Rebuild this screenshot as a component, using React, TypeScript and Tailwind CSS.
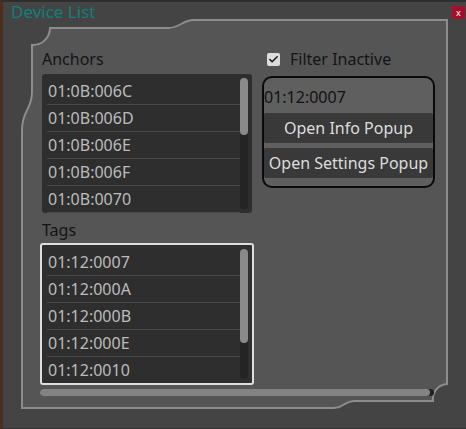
import { Check } from 'lucide-react';

const anchors = ['01:0B:006C', '01:0B:006D', '01:0B:006E', '01:0B:006F', '01:0B:0070'];
const tags = ['01:12:0007', '01:12:000A', '01:12:000B', '01:12:000E', '01:12:0010'];

function DeviceRows({ items, thumbHeight }: { readonly items: string[]; readonly thumbHeight: number }) {
  return (
    <div className="flex h-full">
      <div className="flex-1 pl-[5px] pt-[4px]">
        {items.map((item) => (
          <div
            key={item}
            className="h-[27px] border-b border-[#4a4a4a] pl-[1px] text-[16px] leading-[27px] text-[#bcbcbc]"
          >
            {item}
          </div>
        ))}
      </div>
      {/* vertical scrollbar */}
      <div className="mr-[4px] mt-[4px] mb-[4px] w-[8px] rounded-full bg-[#242424]">
        <div className="w-full rounded-full bg-[#8a8a8a]" style={{ height: thumbHeight }}></div>
      </div>
    </div>
  );
}

export default function App() {
  return (
    <div
      className="relative h-[429px] w-[466px] overflow-hidden border-t-2 border-l-[3px] border-b border-t-[#2e2e2e] border-l-[#4f2d1b] border-b-[#303030] bg-[#444444]"
      style={{ fontFamily: '"Noto Sans", "Open Sans", sans-serif' }}
    >
      {/* Frame drawing */}
      <svg className="absolute left-[-3px] top-[-2px] h-[429px] w-[466px]" viewBox="0 0 466 429">
        <path
          d="M 32 45 A 17 17 0 0 0 50 28 L 168 28 C 180 28 182 20 194 20 L 447 20 L 447 384 A 15 15 0 0 0 433 401 L 354 401 C 344 401 344 408 334 408 L 22 408 L 22 130 C 22 110 32 110 32 92 Z"
          fill="#555555"
          stroke="#8d8d8d"
          strokeWidth="2"
        />
      </svg>

      <div className="relative">
        {/* Title bar */}
        <div className="flex h-[22px] items-start justify-between pl-[8px] pr-[1px]">
          <span className="text-[17px] leading-[20px] text-[#0f7f7f]">Device List</span>
          <div className="mt-[4px] flex h-[13px] w-[13px] items-center justify-center bg-[#a3102b] text-[9px] leading-none text-white">
            x
          </div>
        </div>

        <div className="flex pl-[37px] pt-[25px]">
          {/* Left column */}
          <div className="w-[214px]">
            <div className="ml-[2px] h-[20px] text-[16px] leading-[20px] text-[#141414]">Anchors</div>
            <div className="mx-[2px] mt-[5px] h-[139px] overflow-hidden rounded-[3px] bg-[#2e2e2e]">
              <DeviceRows items={anchors} thumbHeight={57} />
            </div>
            <div className="ml-[2px] mt-[7px] h-[20px] text-[16px] leading-[20px] text-[#141414]">Tags</div>
            <div className="mt-[3px] h-[142px] overflow-hidden rounded-[3px] border-2 border-[#dedede] bg-[#2e2e2e]">
              <DeviceRows items={tags} thumbHeight={94} />
            </div>
            {/* horizontal scrollbar */}
            <div className="mt-[4px] h-[7px] w-[394px] rounded-full bg-[#222222]">
              <div className="h-full w-[390px] rounded-full bg-[#838383]"></div>
            </div>
          </div>

          {/* Right column */}
          <div className="ml-[8px] w-[173px]">
            <div className="flex h-[20px] items-center">
              <div className="ml-[5px] flex h-[13px] w-[13px] items-center justify-center rounded-[2px] bg-[#dcdcdc]">
                <Check className="h-[11px] w-[11px] text-[#1a1a1a]" strokeWidth={3.5} />
              </div>
              <span className="ml-[10px] text-[16px] leading-[20px] text-[#141414]">Filter Inactive</span>
            </div>
            <div className="mt-[7px] rounded-[10px] border-2 border-[#0a0a0a] bg-[#5f5f5f] pb-[8px]">
              <div className="pt-[9px] pb-[6px] text-[16px] leading-[20px] text-[#111111]">01:12:0007</div>
              <div className="flex flex-col gap-[5px]">
                <div className="flex h-[30px] items-center justify-center rounded-[2px] bg-[#393939] text-[16px] text-[#dddddd]">
                  Open Info Popup
                </div>
                <div className="flex h-[30px] items-center justify-center rounded-[2px] bg-[#393939] text-[16px] text-[#dddddd]">
                  Open Settings Popup
                </div>
              </div>
            </div>
          </div>
        </div>
      </div>
    </div>
  );
}
